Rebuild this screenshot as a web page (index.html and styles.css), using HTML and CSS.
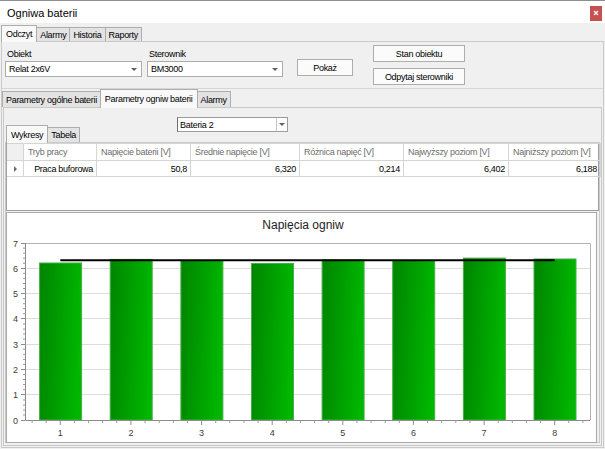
FILE: index.html
```html
<!DOCTYPE html>
<html lang="pl">
<head>
<meta charset="utf-8">
<title>Ogniwa baterii</title>
<link rel="stylesheet" href="styles.css">
</head>
<body>
<div class="win">
  <div class="titlebar">
    <span class="title">Ogniwa baterii</span>
    <span class="close"><svg width="6" height="6" viewBox="0 0 6 6"><path d="M1 1L5 5M5 1L1 5" stroke="#fff" stroke-width="1.2"/></svg></span>
  </div>
  <div class="tabs t1">
    <div class="tab sel">Odczyt</div>
    <div class="tab">Alarmy</div>
    <div class="tab">Historia</div>
    <div class="tab">Raporty</div>
  </div>
  <div class="page p1">
    <div class="ctrls">
      <div class="field f1">
        <label class="lbl">Obiekt</label>
        <div class="combo"><span>Relat 2x6V</span><i class="arr"></i></div>
      </div>
      <div class="field f2">
        <label class="lbl">Sterownik</label>
        <div class="combo"><span>BM3000</span><i class="arr"></i></div>
      </div>
      <div class="btn pokaz">Pokaż</div>
      <div class="btncol">
        <div class="btn">Stan obiektu</div>
        <div class="btn">Odpytaj sterowniki</div>
      </div>
    </div>
    <div class="tabs t2">
      <div class="tab">Parametry ogólne baterii</div>
      <div class="tab sel">Parametry ogniw baterii</div>
      <div class="tab">Alarmy</div>
    </div>
    <div class="page p2">
      <div class="head3">
        <div class="tabs t3">
          <div class="tab sel">Wykresy</div>
          <div class="tab">Tabela</div>
        </div>
        <div class="dxcombo"><span class="dxtext">Bateria 2</span><span class="dxbtn"><i class="arr"></i></span></div>
      </div>
      <div class="p3">
        <div class="grid">
          <div class="row hdr">
            <div class="c c0"></div>
            <div class="c c1">Tryb pracy</div>
            <div class="c c2">Napięcie baterii [V]</div>
            <div class="c c3">Średnie napięcie [V]</div>
            <div class="c c4">Różnica napięć [V]</div>
            <div class="c c5">Najwyższy poziom [V]</div>
            <div class="c c6">Najniższy poziom [V]</div>
          </div>
          <div class="row data">
            <div class="c c0"><i class="rowarr"></i></div>
            <div class="c c1">Praca buforowa</div>
            <div class="c c2">50,8</div>
            <div class="c c3">6,320</div>
            <div class="c c4">0,214</div>
            <div class="c c5">6,402</div>
            <div class="c c6">6,188</div>
          </div>
        </div>
        <div class="chart">
          <svg width="590" height="229" viewBox="0 0 590 229">
            <defs>
              <linearGradient id="bar" x1="0" y1="0" x2="1" y2="0.15">
                <stop offset="0" stop-color="#008400"/>
                <stop offset="1" stop-color="#00b600"/>
              </linearGradient>
            </defs>
            <text class="ctitle" x="296" y="16" text-anchor="middle">Napięcia ogniw</text>
            <path d="M18 55.5H583M18 80.5H583M18 105.5H583M18 131.5H583M18 156.5H583M18 181.5H583" stroke="#dcdcdc" stroke-width="1" fill="none"/>
            <path d="M18 30.5H583.5V207" stroke="#b4b4b4" stroke-width="1" fill="none"/>
            <g fill="url(#bar)" stroke="#45b045" stroke-width="1">
              <rect x="32.6" y="50" width="42" height="157"/>
              <rect x="103.2" y="46.4" width="42" height="160.6"/>
              <rect x="173.9" y="47.4" width="42" height="159.6"/>
              <rect x="244.5" y="50.5" width="42" height="156.5"/>
              <rect x="315.1" y="46.9" width="42" height="160.1"/>
              <rect x="385.7" y="47.6" width="42" height="159.4"/>
              <rect x="456.4" y="45.1" width="42" height="161.9"/>
              <rect x="527" y="46" width="42" height="161"/>
            </g>
            <path d="M53.3 47.2H547.7" stroke="#000" stroke-width="2"/>
            <path d="M18.5 30V207.5H583" stroke="#8c8c8c" stroke-width="1" fill="none"/>
            <path d="M14 30.5H18M14 55.5H18M14 80.5H18M14 105.5H18M14 131.5H18M14 156.5H18M14 181.5H18M14 207.5H18" stroke="#8c8c8c" stroke-width="1"/>
            <path d="M16 202H18M16 197H18M16 192H18M16 187H18M16 176.7H18M16 171.6H18M16 166.5H18M16 161.5H18M16 151.4H18M16 146.3H18M16 141.3H18M16 136.2H18M16 126.1H18M16 121H18M16 116H18M16 110.9H18M16 100.8H18M16 95.7H18M16 90.7H18M16 85.6H18M16 75.5H18M16 70.5H18M16 65.4H18M16 60.3H18M16 50.2H18M16 45.2H18M16 40.1H18M16 35.1H18" stroke="#9a9a9a" stroke-width="1"/>
            <path d="M53.3 207V212M123.9 207V212M194.6 207V212M265.2 207V212M335.8 207V212M406.4 207V212M477.1 207V212M547.7 207V212" stroke="#8c8c8c" stroke-width="1"/>
            <path d="M25.1 207V210M39.2 207V210M67.4 207V210M81.6 207V210M95.7 207V210M109.8 207V210M138.1 207V210M152.2 207V210M166.3 207V210M180.4 207V210M208.7 207V210M222.8 207V210M236.9 207V210M251.1 207V210M279.3 207V210M293.4 207V210M307.6 207V210M321.7 207V210M349.9 207V210M364.1 207V210M378.2 207V210M392.3 207V210M420.6 207V210M434.7 207V210M448.8 207V210M462.9 207V210M491.2 207V210M505.3 207V210M519.4 207V210M533.6 207V210M561.8 207V210M575.9 207V210" stroke="#9a9a9a" stroke-width="1"/>
            <g class="axl" text-anchor="end">
              <text x="11" y="33.5">7</text>
              <text x="11" y="58.5">6</text>
              <text x="11" y="83.5">5</text>
              <text x="11" y="108.5">4</text>
              <text x="11" y="134.5">3</text>
              <text x="11" y="159.5">2</text>
              <text x="11" y="184.5">1</text>
              <text x="11" y="210.5">0</text>
            </g>
            <g class="axl" text-anchor="middle">
              <text x="53.3" y="223">1</text>
              <text x="123.9" y="223">2</text>
              <text x="194.6" y="223">3</text>
              <text x="265.2" y="223">4</text>
              <text x="335.8" y="223">5</text>
              <text x="406.4" y="223">6</text>
              <text x="477.1" y="223">7</text>
              <text x="547.7" y="223">8</text>
            </g>
          </svg>
        </div>
      </div>
    </div>
  </div>
</div>
</body>
</html>
```
FILE: styles.css
```css
* { box-sizing: border-box; }

body {
  margin: 0;
  background: #f0f0f0;
  font-family: "Liberation Sans", Arial, sans-serif;
  font-size: 9px;
  letter-spacing: -0.3px;
  color: #000;
}

.win {
  width: 605px;
  height: 449px;
  display: flex;
  flex-direction: column;
  background: #f0f0f0;
  overflow: hidden;
}

.titlebar {
  height: 23px;
  flex: none;
  background: #fff;
  border-top: 1px solid #8e8e8e;
  display: flex;
  align-items: center;
  justify-content: space-between;
  padding: 2px 3px 0 7px;
}

.title {
  font-size: 11px;
  letter-spacing: 0;
  color: #000;
}

.close {
  width: 12px;
  height: 15px;
  background: #c75050;
  display: flex;
  align-items: center;
  justify-content: center;
}

/* tab strips */
.tabs {
  display: flex;
  align-items: flex-end;
  flex: none;
}

.tab {
  position: relative;
  border: 1px solid #adadad;
  border-bottom: none;
  background: #e3e3e3;
  padding: 0 3px;
  margin-right: -1px;
  white-space: nowrap;
  display: flex;
  align-items: center;
  justify-content: center;
}

.tab.sel {
  background: #f9f9f9;
  z-index: 2;
  margin-bottom: -1px;
  padding: 0 4px;
}

.t1 { height: 18px; padding-left: 1px; }
.t1 .tab { height: 14px; }
.t1 .tab.sel { height: 17px; }

.t2 { height: 18px; padding-left: 0; }
.t2 .tab { height: 16px; }
.t2 .tab.sel { height: 19px; }

.t3 { height: 17px; padding-left: 1px; align-self: flex-end; }
.t3 .tab { height: 15px; }
.t3 .tab.sel { height: 18px; }

/* pages */
.page {
  border: 1px solid #c9c9c9;
  background: #f0f0f0;
  display: flex;
  flex-direction: column;
}

.p1 {
  flex: 1;
  margin: 0 1px 1px 1px;
  min-height: 0;
}

.ctrls {
  height: 47px;
  flex: none;
  display: flex;
  align-items: flex-start;
  padding: 3px 0 0 3px;
  border-bottom: 1px solid #d6d6d6;
}

.field {
  display: flex;
  flex-direction: column;
  margin-top: 3px;
}

.f1 { width: 137px; }
.f2 { width: 136px; margin-left: 5px; }

.lbl {
  height: 13px;
  line-height: 13px;
  padding-left: 2px;
}

.combo {
  height: 16px;
  background: #fff;
  border: 1px solid #acacac;
  display: flex;
  align-items: center;
  justify-content: space-between;
  padding: 0 4px 0 3px;
}

.arr {
  display: block;
  width: 0;
  height: 0;
  border-left: 3px solid transparent;
  border-right: 3px solid transparent;
  border-top: 3px solid #606060;
}

.btn {
  height: 17px;
  border: 1px solid #adadad;
  background: #fbfbfb;
  display: flex;
  align-items: center;
  justify-content: center;
  white-space: nowrap;
}

.pokaz {
  width: 56px;
  margin: 14px 0 0 14px;
}

.btncol {
  width: 92px;
  margin-left: 20px;
  display: flex;
  flex-direction: column;
  gap: 6px;
}

.p2 {
  flex: 1;
  margin: 0 1px 1px 1px;
  min-height: 0;
}

.head3 {
  height: 34px;
  flex: none;
  display: flex;
  align-items: flex-start;
  padding-left: 1px;
}

.dxcombo {
  margin: 9px 0 0 98px;
  width: 111px;
  height: 15px;
  background: #fff;
  border: 1px solid #9c9c9c;
  border-left-color: #6e6e6e;
  display: flex;
  align-items: stretch;
}

.dxtext {
  flex: 1;
  display: flex;
  align-items: center;
  padding-left: 2px;
}

.dxbtn {
  width: 11px;
  border-left: 1px solid #c6c6c6;
  display: flex;
  align-items: center;
  justify-content: center;
}

.p3 {
  flex: 1;
  min-height: 0;
  margin: 0 1px 2px 1px;
  border: 1px solid #c9c9c9;
  display: flex;
  flex-direction: column;
  background: #f0f0f0;
}

/* data grid */
.grid {
  height: 68px;
  flex: none;
  background: #fff;
  border: 1px solid #a0a0a0;
  border-top: none;
}

.row {
  display: grid;
  grid-template-columns: 17px 73px 94px 109px 104px 105px 92px;
}

.c {
  border-right: 1px solid #d5d5d5;
  border-bottom: 1px solid #d5d5d5;
  display: flex;
  align-items: center;
  white-space: nowrap;
  overflow: hidden;
}

.hdr .c {
  height: 18px;
  color: #6d6d6d;
  padding-left: 4px;
  border-top: 1px solid #d5d5d5;
}

.hdr .c0 { background: #f0f0f0; }

.data .c {
  height: 16px;
  justify-content: flex-end;
  padding-right: 3px;
}

.data .c0 {
  justify-content: center;
  padding: 0;
}

.rowarr {
  display: block;
  width: 0;
  height: 0;
  border-top: 3px solid transparent;
  border-bottom: 3px solid transparent;
  border-left: 3px solid #6a6a6a;
}

/* chart */
.chart {
  margin: 1px 2px 0 0;
  border: 1px solid #a9a9a9;
  background: #fff;
  height: 231px;
  flex: none;
}

.chart svg { display: block; }

.ctitle {
  font-size: 12px;
  letter-spacing: 0;
  fill: #222;
}

.axl text {
  font-size: 9px;
  letter-spacing: 0;
  fill: #3c3c3c;
}
```
